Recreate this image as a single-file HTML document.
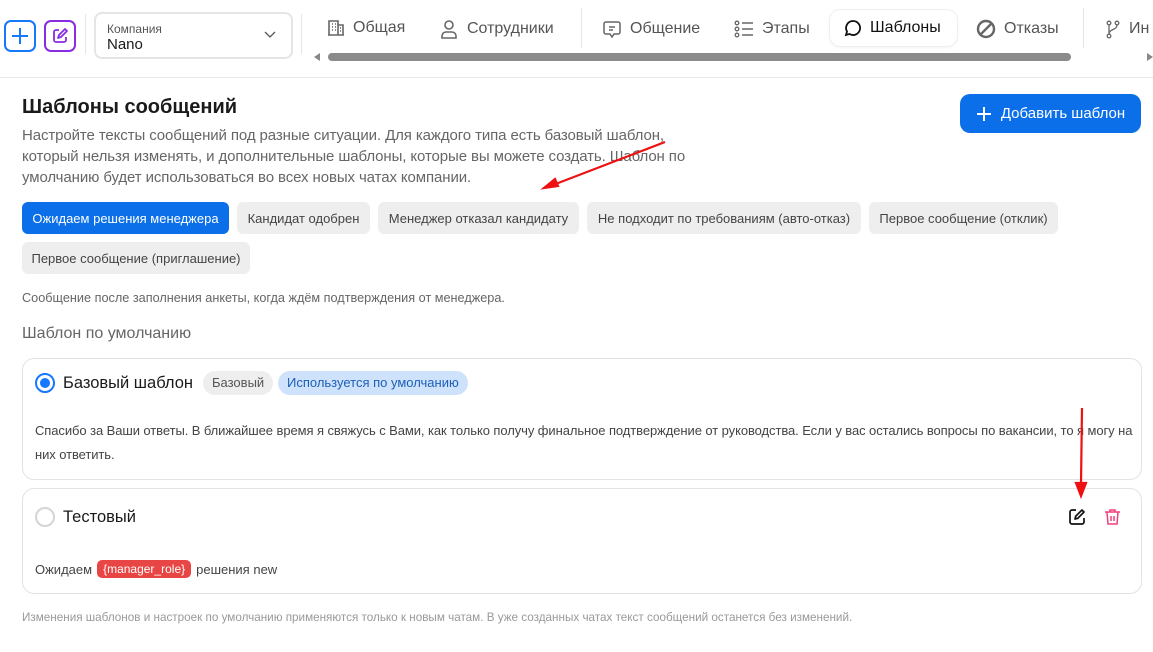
<!DOCTYPE html>
<html><head><meta charset="utf-8"><style>
*{box-sizing:border-box;margin:0;padding:0}
body{width:1153px;height:652px;overflow:hidden;background:#fff;font-family:"Liberation Sans","Noto Sans CJK SC",sans-serif;color:#1a1a1a;position:relative}
.a{position:absolute;white-space:nowrap}
.tab{position:absolute;top:19px;font-size:16px;color:#555;display:flex;align-items:center;gap:8px}
.chip{position:absolute;height:32px;border-radius:6px;background:#eee;color:#444;font-size:13px;display:flex;align-items:center;justify-content:center}
.card{position:absolute;left:22px;width:1120px;border:1px solid #e3e3e3;border-radius:12px}
</style></head><body>
<div class="a" style="left:0;top:77px;width:1153px;height:1px;background:#e8e8e8"></div>
<div class="a" style="left:4px;top:20px;width:32px;height:32px;border:2px solid #1677ff;border-radius:7px"><svg width="28" height="28" viewBox="0 0 28 28"><path d="M14 6v16M6 14h16" stroke="#1677ff" stroke-width="2"/></svg></div>
<div class="a" style="left:44px;top:20px;width:32px;height:32px;border:2px solid #8a2be2;border-radius:7px"><svg width="28" height="28" viewBox="0 0 28 28"><path d="M13 8H10a2 2 0 0 0-2 2v8a2 2 0 0 0 2 2h8a2 2 0 0 0 2-2v-3M12 16l1-3 6-6 2 2-6 6z" fill="none" stroke="#8a2be2" stroke-width="1.8" stroke-linejoin="round"/></svg></div>
<div class="a" style="left:85px;top:14px;width:1px;height:40px;background:#e5e5e5"></div>
<div class="a" style="left:94px;top:12px;width:199px;height:47px;border:2px solid #e5e5e5;border-radius:8px"></div>
<div class="a" style="left:107px;top:22px;font-size:12px;color:#555">Компания</div>
<div class="a" style="left:107px;top:36px;font-size:15px">Nano</div>
<svg class="a" style="left:264px;top:31px" width="12" height="8"><path d="M1 1l5 5 5-5" fill="none" stroke="#555" stroke-width="1.3"/></svg>
<div class="a" style="left:301px;top:14px;width:1px;height:40px;background:#e5e5e5"></div>
<div class="tab" style="left:327px"><svg width="18" height="18" viewBox="0 0 18 18"><path d="M2 16V2h9v14M11 6h5v10M1 16h16" fill="none" stroke="#666" stroke-width="1.6"/><path d="M5 5h1M8 5h1M5 8h1M8 8h1M5 11h1M8 11h1M13 9h1M13 12h1" stroke="#666" stroke-width="1.6"/></svg>Общая</div>
<div class="tab" style="left:439px"><svg width="20" height="20" viewBox="0 0 20 20"><circle cx="10" cy="6" r="4" fill="none" stroke="#666" stroke-width="1.6"/><path d="M3 19v-2a4 4 0 0 1 4-4h6a4 4 0 0 1 4 4v2z" fill="none" stroke="#666" stroke-width="1.6"/></svg>Сотрудники</div>
<div class="a" style="left:581px;top:8px;width:1px;height:40px;background:#e5e5e5"></div>
<div class="tab" style="left:602px"><svg width="20" height="20" viewBox="0 0 20 20"><path d="M4 3h12a2 2 0 0 1 2 2v8a2 2 0 0 1-2 2h-4l-2 3-2-3H4a2 2 0 0 1-2-2V5a2 2 0 0 1 2-2zM7 8h6M7 11h4" fill="none" stroke="#666" stroke-width="1.5"/></svg>Общение</div>
<div class="tab" style="left:734px"><svg width="20" height="20" viewBox="0 0 20 20"><circle cx="3" cy="4" r="1.8" fill="none" stroke="#666" stroke-width="1.3"/><circle cx="3" cy="10" r="1.8" fill="none" stroke="#666" stroke-width="1.3"/><circle cx="3" cy="16" r="1.8" fill="none" stroke="#666" stroke-width="1.3"/><path d="M8 4h11M8 10h11M8 16h11" stroke="#666" stroke-width="1.5"/></svg>Этапы</div>
<div class="a" style="left:830px;top:10px;width:127px;height:36px;border-radius:10px;background:#fff;box-shadow:0 0 0 1px #eee,0 1px 3px rgba(0,0,0,.08)"></div>
<div class="tab" style="left:844px;color:#111"><svg width="18" height="18" viewBox="0 0 18 18"><path d="M9 2a7 7 0 1 1-3.5 13L2 16l1-3.5A7 7 0 0 1 9 2z" fill="none" stroke="#111" stroke-width="1.8"/></svg>Шаблоны</div>
<div class="tab" style="left:976px"><svg width="20" height="20" viewBox="0 0 20 20"><circle cx="10" cy="10" r="8" fill="none" stroke="#666" stroke-width="2.4"/><path d="M5 15L15 5" stroke="#666" stroke-width="2.4"/></svg>Отказы</div>
<div class="a" style="left:1083px;top:8px;width:1px;height:40px;background:#e5e5e5"></div>
<div class="tab" style="left:1105px"><svg width="16" height="20" viewBox="0 0 16 20"><circle cx="4" cy="4" r="1.8" fill="none" stroke="#666" stroke-width="1.3"/><circle cx="4" cy="17" r="1.8" fill="none" stroke="#666" stroke-width="1.3"/><circle cx="12" cy="4" r="1.8" fill="none" stroke="#666" stroke-width="1.3"/><path d="M4 6v9M12 6c0 5-8 4-8 9" fill="none" stroke="#666" stroke-width="1.3"/></svg>Ин</div>
<svg class="a" style="left:314px;top:53px" width="6" height="8"><path d="M6 0v8L0 4z" fill="#888"/></svg>
<div class="a" style="left:328px;top:53px;width:743px;height:8px;border-radius:4px;background:#8a8a8a"></div>
<svg class="a" style="left:1147px;top:53px" width="6" height="8"><path d="M0 0v8l6-4z" fill="#888"/></svg>

<div class="a" style="left:22px;top:96px;font-size:20px;font-weight:bold">Шаблоны сообщений</div>
<div class="a" style="left:22px;top:125px;font-size:15px;line-height:21px;color:#666;white-space:normal;width:680px;letter-spacing:-0.1px">Настройте тексты сообщений под разные ситуации. Для каждого типа есть базовый шаблон, который нельзя изменять, и дополнительные шаблоны, которые вы можете создать. Шаблон по умолчанию будет использоваться во всех новых чатах компании.</div>
<div class="a" style="left:960px;top:94px;width:181px;height:39px;border-radius:10px;background:#0a6fe8;color:#fff;font-size:15px;display:flex;align-items:center;justify-content:center;gap:9px"><svg width="16" height="16"><path d="M8 1v14M1 8h14" stroke="#fff" stroke-width="2"/></svg>Добавить шаблон</div>

<div class="chip" style="left:22px;top:202px;width:207px;background:#0a6fe8;color:#fff">Ожидаем решения менеджера</div>
<div class="chip" style="left:237px;top:202px;width:133px">Кандидат одобрен</div>
<div class="chip" style="left:378px;top:202px;width:201px">Менеджер отказал кандидату</div>
<div class="chip" style="left:587px;top:202px;width:274px">Не подходит по требованиям (авто-отказ)</div>
<div class="chip" style="left:869px;top:202px;width:189px">Первое сообщение (отклик)</div>
<div class="chip" style="left:22px;top:242px;width:228px">Первое сообщение (приглашение)</div>
<div class="a" style="left:22px;top:291px;font-size:12.7px;color:#666">Сообщение после заполнения анкеты, когда ждём подтверждения от менеджера.</div>
<div class="a" style="left:22px;top:325px;font-size:16px;color:#666">Шаблон по умолчанию</div>

<div class="card" style="top:358px;height:122px"></div>
<div class="a" style="left:35px;top:373px;width:20px;height:20px;border:2px solid #1677ff;border-radius:50%"><div style="margin:3px;width:10px;height:10px;border-radius:50%;background:#1677ff"></div></div>
<div class="a" style="left:63px;top:374px;font-size:16.5px">Базовый шаблон</div>
<div class="a" style="left:203px;top:371px;height:24px;padding:0 9px;border-radius:12px;background:#eee;color:#555;font-size:13px;line-height:24px">Базовый</div>
<div class="a" style="left:278px;top:371px;height:24px;padding:0 9px;border-radius:12px;background:#cfe2fb;color:#1c5fb8;font-size:13px;line-height:24px">Используется по умолчанию</div>
<div class="a" style="left:35px;top:419px;width:1100px;font-size:13px;line-height:24px;color:#444;white-space:normal;letter-spacing:-0.08px">Спасибо за Ваши ответы. В ближайшее время я свяжусь с Вами, как только получу финальное подтверждение от руководства. Если у вас остались вопросы по вакансии, то я могу на них ответить.</div>

<div class="card" style="top:488px;height:106px"></div>
<div class="a" style="left:35px;top:507px;width:20px;height:20px;border:2px solid #d5d5d5;border-radius:50%"></div>
<div class="a" style="left:63px;top:508px;font-size:16.5px">Тестовый</div>
<svg class="a" style="left:1068px;top:508px" width="18" height="18" viewBox="0 0 18 18"><path d="M8 2H4a2 2 0 0 0-2 2v10a2 2 0 0 0 2 2h10a2 2 0 0 0 2-2v-4M7 11l.7-2.8L14 2l2 2-6.2 6.3z" fill="none" stroke="#111" stroke-width="1.7" stroke-linejoin="round"/></svg>
<svg class="a" style="left:1104px;top:508px" width="17" height="18" viewBox="0 0 17 18"><path d="M1 4h15M6 4V2h5v2M3 4l1 12h9l1-12M7 8v5M10 8v5" fill="none" stroke="#f0407a" stroke-width="1.5"/></svg>
<div class="a" style="left:35px;top:560px;font-size:13px;color:#444;display:flex;align-items:center;gap:5px">Ожидаем <span style="background:#e84545;color:#fff;border-radius:5px;padding:2px 6px;font-size:12px">{manager_role}</span> решения new</div>

<div class="a" style="left:22px;top:611px;font-size:11.7px;color:#999">Изменения шаблонов и настроек по умолчанию применяются только к новым чатам. В уже созданных чатах текст сообщений останется без изменений.</div>

<svg class="a" style="left:0;top:0" width="1153" height="652"><g stroke="#ee1111" stroke-width="2.2" fill="#ee1111"><line x1="665" y1="142" x2="553" y2="185"/><path d="M544 188l11-9 3 7z"/><line x1="1082" y1="408" x2="1081" y2="484"/><path d="M1081 496l-5-13h10z"/></g></svg>
</body></html>
